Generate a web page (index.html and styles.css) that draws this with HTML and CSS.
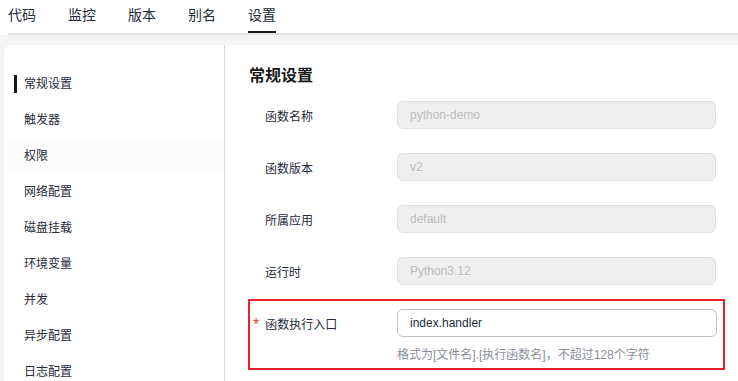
FILE: index.html
```html
<!DOCTYPE html>
<html lang="zh-CN">
<head>
    <meta charset="UTF-8">
    <meta name="viewport" content="width=device-width, initial-scale=1.0">
    <title>函数设置</title>
    <link rel="stylesheet" href="styles.css">
</head>
<body>

<div class="tabs">
    <div class="tab">代码</div>
    <div class="tab">监控</div>
    <div class="tab">版本</div>
    <div class="tab">别名</div>
    <div class="tab active">设置</div>
</div>

<div class="main">
    <div class="card">
        <ul class="side">
            <li class="active">常规设置</li>
            <li>触发器</li>
            <li class="hover">权限</li>
            <li>网络配置</li>
            <li>磁盘挂载</li>
            <li>环境变量</li>
            <li>并发</li>
            <li>异步配置</li>
            <li>日志配置</li>
        </ul>
        <div class="content">
            <h2>常规设置</h2>
            <div class="field">
                <label>函数名称</label>
                <input class="input" type="text" value="python-demo" disabled>
            </div>
            <div class="field">
                <label>函数版本</label>
                <input class="input" type="text" value="v2" disabled>
            </div>
            <div class="field">
                <label>所属应用</label>
                <input class="input" type="text" value="default" disabled>
            </div>
            <div class="field">
                <label>运行时</label>
                <input class="input" type="text" value="Python3.12" disabled>
            </div>
            <!-- highlighted entry field -->
            <div class="field highlight">
                <label><span class="req">*</span>函数执行入口</label>
                <input class="input" type="text" value="index.handler">
                <div class="hint">格式为[文件名].[执行函数名]，不超过128个字符</div>
            </div>
        </div>
    </div>
</div>

</body>
</html>
```

FILE: styles.css
```css
body {
    margin: 0;
    font-family: "Liberation Sans", "Noto Sans CJK SC", sans-serif;
    color: #252b3a;
    background: #ffffff;
    overflow: hidden;
}
.tabs {
    display: flex;
    gap: 32px;
    margin-left: 8px;
    height: 33px;
    border-bottom: 2px solid #e2e2e2;
}
.tab {
    box-sizing: border-box;
    height: 33px;
    padding-top: 5px;
    font-size: 14px;
    line-height: 20px;
    color: #252b3a;
}
.tab.active {
    border-bottom: 2px solid #191919;
}
.main {
    background: #f3f3f3;
    padding: 10px 0 0 4px;
    height: 346px;
}
.card {
    display: flex;
    background: #ffffff;
    border-radius: 8px 0 0 0;
    height: 100%;
}
.side {
    list-style: none;
    margin: 0;
    padding: 21px 0 0 0;
    width: 220px;
    border-right: 1px solid #dcdcdc;
    border-radius: 8px 0 0 0;
}
.side li {
    position: relative;
    height: 36px;
    line-height: 36px;
    padding-left: 20px;
    font-size: 12px;
    color: #252b3a;
}
.side li.hover {
    background: #fcfcfc;
}
.side li.active::before {
    content: "";
    position: absolute;
    left: 10px;
    top: 9px;
    width: 3px;
    height: 18px;
    background: #191919;
}
.content {
    flex: 1;
    padding: 19px 0 0 24px;
}
h2 {
    margin: 0 0 13px 0;
    font-size: 16px;
    line-height: 24px;
    font-weight: bold;
    color: #191919;
}
.field {
    display: grid;
    grid-template-columns: 148px 319px;
    align-items: center;
    margin-bottom: 24px;
}
.field label {
    padding-left: 16px;
    font-size: 12px;
    color: #252b3a;
}
.input {
    box-sizing: border-box;
    width: 100%;
    height: 28px;
    padding: 0 12px;
    font-family: "Liberation Sans", "Noto Sans CJK SC", sans-serif;
    font-size: 12px;
    color: #252b3a;
    background: #ffffff;
    border: 1px solid #c2c2c2;
    border-radius: 6px;
    outline: none;
}
.input:disabled {
    background: #efefef;
    border-color: #dfdfdf;
    color: #bbbbbb;
}
.field.highlight {
    grid-template-columns: 147px 320px;
    row-gap: 11px;
    width: 473px;
    margin: -10px 0 0 -1px;
    padding: 8px 0 6px 0;
    border: 2px solid #e8202a;
}
.field.highlight label {
    display: flex;
    align-items: center;
    padding-left: 3px;
}
.req {
    color: #e8413f;
    font-size: 16px;
    line-height: 12px;
    margin: 4px 6px 0 0;
}
.hint {
    grid-column: 2;
    font-size: 12px;
    line-height: 14px;
    color: #8a8e99;
}
```
